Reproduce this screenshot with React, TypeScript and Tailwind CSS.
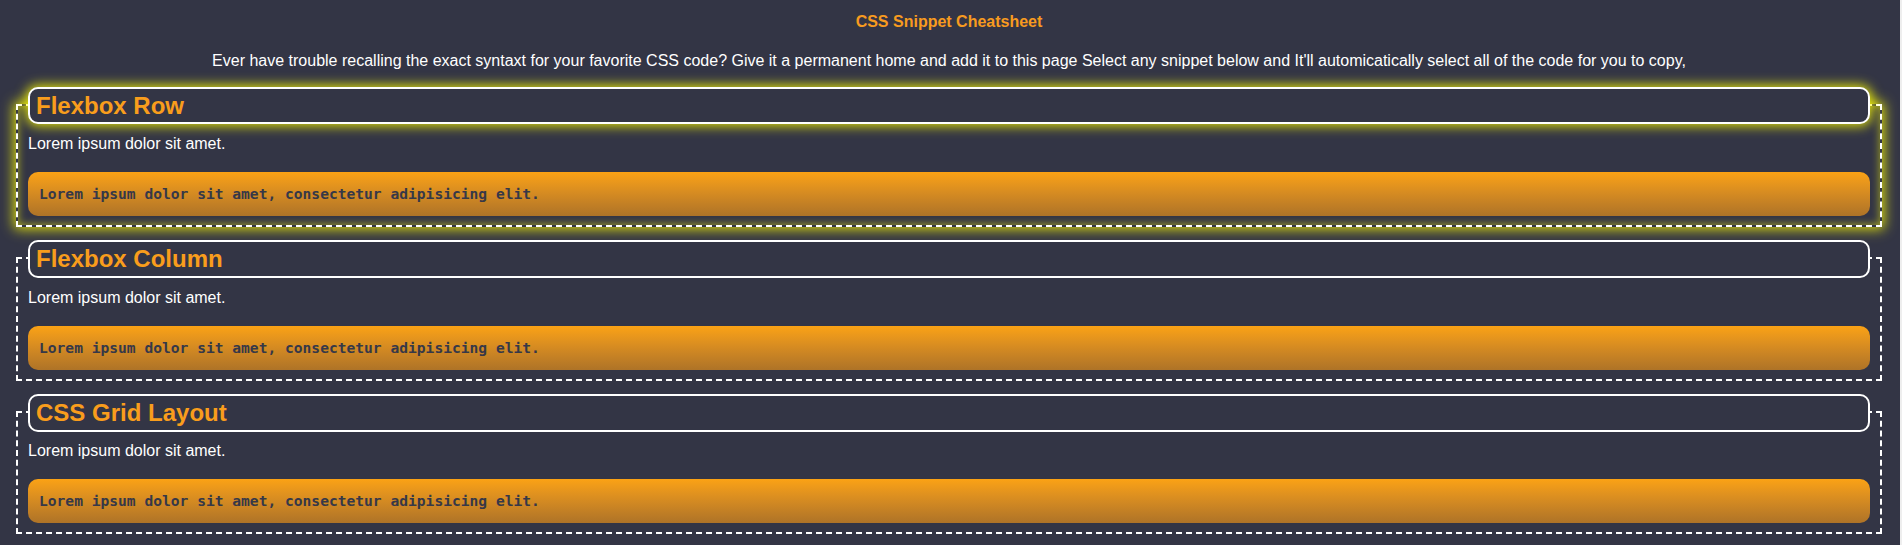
import React from "react";

const sections = [
  { title: "Flexbox Row", glow: true },
  { title: "Flexbox Column", glow: false },
  { title: "CSS Grid Layout", glow: false },
];

function Section({ title, glow, first }: { title: string; glow: boolean; first: boolean }) {
  return (
    <section
      className={
        "border-2 border-dashed border-white px-[10px] pb-[9px] " +
        (first ? "mt-[33px] " : "mt-[30.5px] ") +
        (glow ? "shadow-[0_0_12px_2px_rgba(255,255,0,0.85),inset_0_0_8px_rgba(255,255,0,0.6)]" : "")
      }
    >
      <h2
        className={
          "relative -mt-[19px] bg-[#333545] border-2 border-white rounded-[10px] pl-[6px] py-[3px] text-[24px] leading-[27.6px] font-bold text-[#f99d1c] " +
          (glow ? "shadow-[0_0_12px_2px_rgba(255,255,0,0.85)]" : "")
        }
      >
        {title}
      </h2>
      <p className="mt-[10.5px] text-[16px] leading-[18.4px] text-white">Lorem ipsum dolor sit amet.</p>
      <div className="mt-[18.6px] h-[44px] flex items-center rounded-[10px] bg-gradient-to-b from-[#fba214] to-[#ae7327] pl-[11px]">
        <code className="font-['DejaVu_Sans_Mono',monospace] font-bold text-[14.6px] text-[#363848]">
          Lorem ipsum dolor sit amet, consectetur adipisicing elit.
        </code>
      </div>
    </section>
  );
}

export default function App() {
  return (
    <div className="flex w-[1902px] min-h-[545px] bg-[#333545] font-['Liberation_Sans',Arial,sans-serif]">
      <main className="flex-1 pl-[16px] pr-[18px] pb-[11px]">
        <h1 className="pt-[12.5px] text-center text-[16px] leading-[18.4px] font-bold text-[#f89b1f]">
          CSS Snippet Cheatsheet
        </h1>
        <p className="mt-[21.5px] text-center text-[16px] leading-[18.4px] text-white">
          Ever have trouble recalling the exact syntaxt for your favorite CSS code? Give it a permanent home and add it to this page Select any snippet below and It'll automicatically select all of the code for you to copy,
        </p>
        {sections.map((s, i) => (
          <Section key={s.title} title={s.title} glow={s.glow} first={i === 0} />
        ))}
      </main>
      <div className="w-[2px] bg-[#eeeeee]" />
    </div>
  );
}
